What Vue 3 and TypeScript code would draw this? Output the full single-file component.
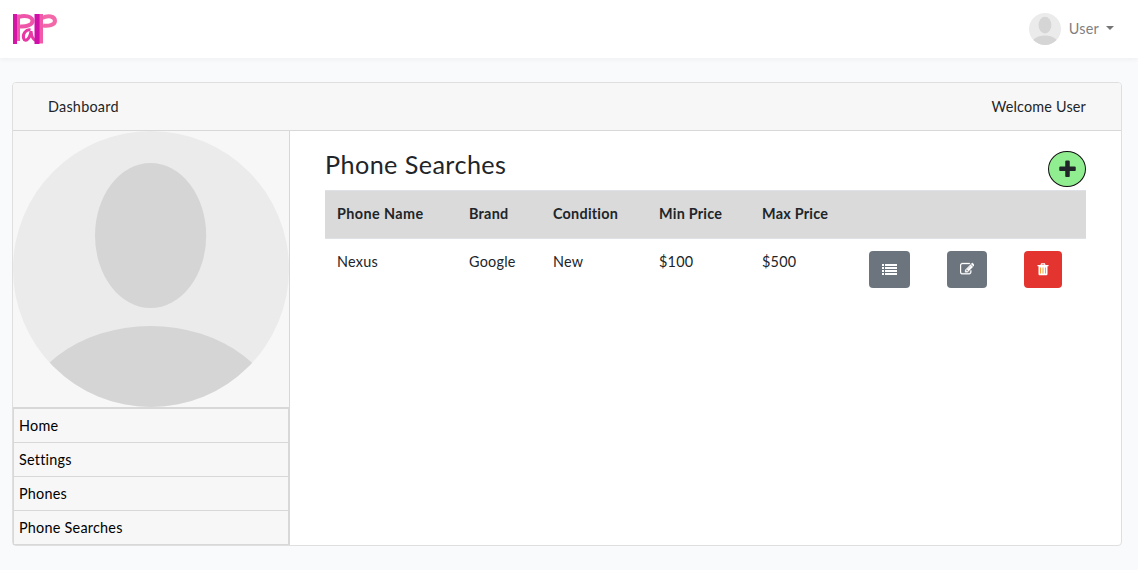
<script setup lang="ts">
interface PhoneSearch {
  name: string
  brand: string
  condition: string
  min: string
  max: string
}

const links: string[] = ['Home', 'Settings', 'Phones', 'Phone Searches']
const searches: PhoneSearch[] = [
  { name: 'Nexus', brand: 'Google', condition: 'New', min: '$100', max: '$500' },
]
</script>

<template>
  <div class="page">
    <nav class="navbar">
      <svg class="logo" viewBox="0 0 46 32" fill="none" stroke-linecap="butt">
        <path d="M7 4C12 2 20.500 3 20.500 8C20.500 12 14 14 8 13.500" stroke="#ee55a8" stroke-width="4" />
        <path d="M6.500 1.500V28" stroke="#f05aae" stroke-width="3" />
        <path d="M3 1V31" stroke="#d515a5" stroke-width="4" />
        <path d="M18.500 17C14 16 10.500 21 11.500 25C13 30 18 26 19 18C19.500 24 21 27.500 25 28" stroke="#e838a4" stroke-width="3" />
        <path d="M30 5C36 2 43 3 43 8C43 12 36 13.500 31 12.500" stroke="#f268a9" stroke-width="4" />
        <path d="M29 1V30.500" stroke="#f05aa9" stroke-width="4" />
        <path d="M25 1V31" stroke="#cf0fa8" stroke-width="5" />
      </svg>
      <div class="account">
        <svg class="avatar-small" viewBox="0 0 276 276">
          <defs><clipPath id="round-small"><circle cx="138" cy="138" r="138" /></clipPath></defs>
          <g clip-path="url(#round-small)">
            <rect width="276" height="276" fill="#ebebeb" />
            <ellipse cx="137.600" cy="104.500" rx="55.600" ry="72.500" fill="#d5d5d5" />
            <ellipse cx="137.600" cy="297" rx="132" ry="102" fill="#d5d5d5" />
          </g>
        </svg>
        <span class="user">User</span>
        <span class="caret"></span>
      </div>
    </nav>

    <main class="card">
      <header class="card-header">
        <span class="dash">Dashboard</span>
        <span class="welcome">Welcome User</span>
      </header>
      <div class="card-body">
        <aside class="sidebar">
          <svg class="avatar" viewBox="0 0 276 276">
            <defs><clipPath id="round-large"><circle cx="138" cy="138" r="138" /></clipPath></defs>
            <g clip-path="url(#round-large)">
              <rect width="276" height="276" fill="#ebebeb" />
              <ellipse cx="137.600" cy="104.500" rx="55.600" ry="72.500" fill="#d5d5d5" />
              <ellipse cx="137.600" cy="297" rx="132" ry="102" fill="#d5d5d5" />
            </g>
          </svg>
          <ul class="menu">
            <li v-for="link in links" :key="link">{{ link }}</li>
          </ul>
        </aside>
        <section class="content">
          <div class="title-row">
            <h1>Phone Searches</h1>
            <button class="add" aria-label="Add">
              <svg viewBox="0 0 1792 1792" width="21" height="21"><path fill="#212529" d="M1600 736v192q0 40-28 68t-68 28h-416v416q0 40-28 68t-68 28h-192q-40 0-68-28t-28-68v-416h-416q-40 0-68-28t-28-68v-192q0-40 28-68t68-28h416v-416q0-40 28-68t68-28h192q40 0 68 28t28 68v416h416q40 0 68 28t28 68z" /></svg>
            </button>
          </div>
          <div class="row head">
            <span class="h-name">Phone Name</span>
            <span>Brand</span>
            <span>Condition</span>
            <span>Min Price</span>
            <span>Max Price</span>
          </div>
          <div v-for="s in searches" :key="s.name" class="row">
            <span>{{ s.name }}</span>
            <span>{{ s.brand }}</span>
            <span>{{ s.condition }}</span>
            <span>{{ s.min }}</span>
            <span>{{ s.max }}</span>
            <span>
              <button class="btn list" aria-label="Details">
                <svg viewBox="0 0 15 11" width="15" height="11" fill="#fff" shape-rendering="crispEdges">
                  <path d="M0 0h2v2H0zM3 0h12v2H3zM0 3h2v2H0zM3 3h12v2H3zM0 6h2v2H0zM3 6h12v2H3zM0 9h2v2H0zM3 9h12v2H3z" />
                </svg>
              </button>
            </span>
            <span>
              <button class="btn edit" aria-label="Edit">
                <svg viewBox="0 0 1792 1792" width="14.4" height="14.4"><path fill="#fff" stroke="#fff" stroke-width="40" d="M888 1184l116-116-152-152-116 116v56h96v96h56zm440-720q-16-16-33 1l-350 350q-17 17-1 33t33-1l350-350q17-17 1-33zm80 594v190q0 119-84.500 203.500t-203.500 84.500h-832q-119 0-203.500-84.500t-84.500-203.500v-832q0-119 84.500-203.500t203.500-84.500h832q63 0 117 25 15 7 18 23 3 17-9 29l-49 49q-14 14-32 8-23-6-45-6h-832q-66 0-113 47t-47 113v832q0 66 47 113t113 47h832q66 0 113-47t47-113v-126q0-13 9-22l64-64q15-15 35-7t20 29zm-96-738l288 288-672 672h-288v-288zm444 132l-92 92-288-288 92-92q28-28 68-28t68 28l152 152q28 28 28 68t-28 68z" /></svg>
              </button>
            </span>
            <span>
              <button class="btn trash" aria-label="Delete">
                <svg viewBox="0 0 12 13" width="12" height="13">
                  <path fill="none" stroke="#fff" stroke-width="1.200" d="M4 2L4.500 .8H7.500L8 2" />
                  <path fill="#fff" d="M.5 2H11.500V3.200H10.500V11Q10.500 12.200 9.500 12.200H2.500Q1.500 12.200 1.500 11V3.200H.5z" />
                  <path fill="#f7a13c" d="M3 4.500h1v6H3zM5.500 4.500h1v6h-1zM8 4.500h1v6H8z" />
                </svg>
              </button>
            </span>
          </div>
        </section>
      </div>
    </main>
  </div>
</template>

<style>
body {
  margin: 0;
  background: #f8fafc;
}
</style>

<style scoped>
* {
  box-sizing: border-box;
}
.page {
  height: 570px;
  overflow: hidden;
  background: #f8fafc;
  color: #212529;
  font: 14.4px/23px Lato, "Liberation Sans", sans-serif;
  letter-spacing: 0.24px;
}
.navbar {
  height: 58px;
  padding: 0 24px 0 12px;
  background: #fff;
  box-shadow: 0 2px 4px rgba(0, 0, 0, 0.04);
  display: flex;
  align-items: center;
  justify-content: space-between;
}
.logo {
  width: 46px;
  height: 32px;
}
.account {
  display: flex;
  align-items: center;
  color: #808080;
}
.avatar-small {
  width: 32px;
  height: 32px;
}
.user {
  margin-left: 8px;
  padding-bottom: 2px;
}
.caret {
  margin: 0 0 2px 7px;
  border: 4px solid transparent;
  border-top-color: #757575;
  border-bottom: 0;
}
.card {
  width: 1110px;
  height: 464px;
  margin: 24px 0 0 12px;
  border: 1px solid #dfdfdf;
  border-radius: 4px;
  background: #fff;
}
.card-header {
  height: 48px;
  padding: 0 35px;
  background: #f7f7f7;
  border-bottom: 1px solid #d8d8d8;
  border-radius: 3px 3px 0 0;
  display: flex;
  align-items: center;
  justify-content: space-between;
}
.welcome {
  letter-spacing: 0.18px;
}
.card-body {
  display: flex;
}
.sidebar {
  width: 277px;
  height: 414px;
  border-right: 1px solid #d8d8d8;
  background: #f7f7f7;
}
.avatar {
  display: block;
  width: 276px;
  height: 276px;
}
.menu {
  list-style: none;
  margin: 0;
  padding: 0;
  height: 138px;
  border: 1px solid #d8d8d8;
  border-bottom: 0;
  color: #000;
}
.menu li {
  height: 34px;
  padding: 0 5px;
  line-height: 33px;
  border-bottom: 1px solid #d8d8d8;
}
.menu li:first-child {
  height: 35px;
  border-top: 1px solid #d8d8d8;
}
.content {
  flex: 1;
  padding: 20px 35px 0;
}
.title-row {
  height: 39px;
  display: flex;
  align-items: flex-start;
  justify-content: space-between;
}
h1 {
  margin: 0;
  font-size: 25.2px;
  font-weight: 400;
  line-height: 27px;
  letter-spacing: 0.42px;
}
button {
  display: flex;
  align-items: center;
  justify-content: center;
  padding: 0;
  border: 0;
}
.add {
  width: 38px;
  height: 36px;
  border: 1px solid #111;
  border-radius: 50%;
  background: #90ee90;
}
.row {
  display: grid;
  grid-template-columns: 132px 84px 106px 103px 107px 78px 77px 74px;
  padding-top: 11px;
}
.row > span {
  padding-left: 12px;
  white-space: nowrap;
}
.head {
  height: 49px;
  border-top: 1px solid #dee2e6;
  border-bottom: 1px solid #dee2e6;
  background: #dadada;
  font-weight: 700;
}
.head .h-name {
  letter-spacing: 0.4px;
}
.btn {
  height: 37px;
  margin-top: 1px;
  border-radius: 4px;
  background: #6c757d;
}
.list {
  width: 41px;
}
.edit {
  width: 40px;
}
.trash {
  width: 38px;
  background: #e3342f;
}
</style>
